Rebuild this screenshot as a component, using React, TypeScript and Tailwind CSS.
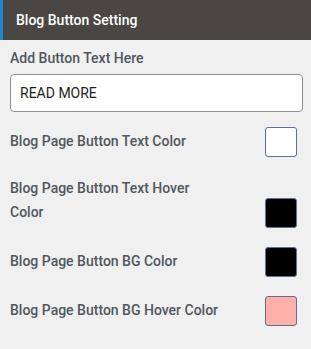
export default function App() {
  const rows = [
    { label: 'Blog Page Button Text Color', color: '#ffffff' },
    { label: 'Blog Page Button Text Hover Color', color: '#000000' },
    { label: 'Blog Page Button BG Color', color: '#000000' },
    { label: 'Blog Page Button BG Hover Color', color: '#ffb0a8' },
  ]

  return (
    <div className="h-[349px] w-[311px] bg-[#f0f0f0] font-['Roboto',sans-serif]">
      {/* Section header */}
      <div className="flex h-[40px] items-center border-l-[3px] border-[#1e88c8] bg-[#4a4644] pl-[13px]">
        <span className="text-[14px] font-medium text-white">Blog Button Setting</span>
      </div>

      <div className="px-[10px]">
        <div className="pt-[6px] text-[14px] leading-[24px] font-medium text-[#50575e]">Add Button Text Here</div>
        <input
          className="mt-[4px] h-[38px] w-[293px] rounded-[4px] border border-[#8c8f94] bg-white px-[9px] text-[14px] text-[#1e1e1e] outline-none"
          defaultValue="READ MORE"
        />

        <div className="mt-[15px] flex flex-col gap-[19px] pr-[4px]">
          {rows.map((r) => (
            <div key={r.label} className="flex items-end justify-between">
              <div className="mb-[4px] w-[214px] text-[14px] leading-[24px] font-medium text-[#50575e]">{r.label}</div>
              <div
                className="h-[30px] w-[32px] rounded-[3px] border border-[#5d6f94]"
                style={{ backgroundColor: r.color }}
              />
            </div>
          ))}
        </div>
      </div>
    </div>
  )
}
